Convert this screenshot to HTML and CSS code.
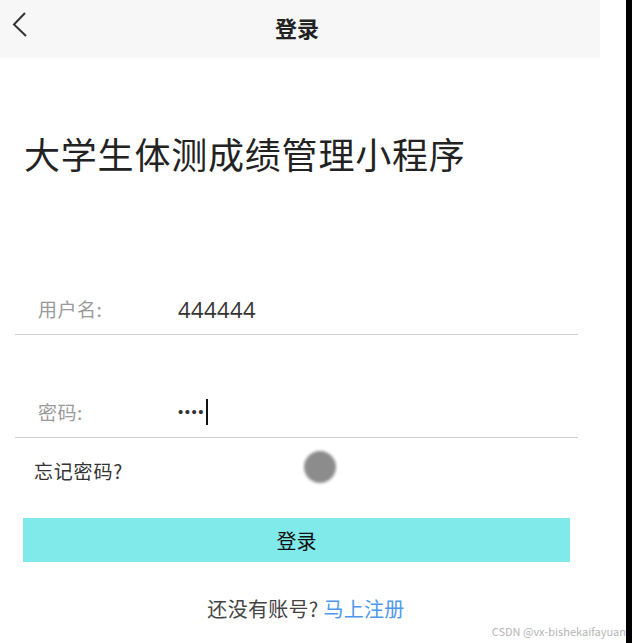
FILE: index.html
```html
<!DOCTYPE html>
<html>
<head>
    <title>登录</title>
    <link rel="stylesheet" href="styles.css">
</head>
<body>
    <div class="screen">
        <div class="page">
            <div class="nav">
                <svg class="back" width="20" height="28" viewBox="0 0 20 28">
                    <path d="M14 2 L3 13.5 L15 25" fill="none" stroke="#333" stroke-width="2"/>
                </svg>
                <span class="nav-title">登录</span>
            </div>

            <h1 class="app-title">大学生体测成绩管理小程序</h1>

            <div class="field">
                <label class="field-label">用户名:</label>
                <span class="field-value">444444</span>
            </div>
            <div class="field field-pwd">
                <label class="field-label">密码:</label>
                <span class="field-value dots">••••</span><span class="caret"></span>
            </div>

            <div class="forgot">忘记密码?</div>

            <button class="login-btn">登录</button>

            <div class="register">还没有账号? <a class="register-link">马上注册</a></div>

            <div class="touch"></div>
            <div class="watermark">CSDN @vx-bishekaifayuan</div>
        </div>
        <div class="edge"></div>
    </div>
</body>
</html>
```

FILE: styles.css
```css
:root {
    --nav-bg: #F7F7F7;
    --text-color: #222222;
    --label-color: #9A9A9A;
    --line-color: #D0D0D0;
    --button-color: #80EAEA;
    --link-color: #4F98EE;
}

body {
    margin: 0;
    font-family: "Noto Sans CJK SC", "Noto Sans", sans-serif;
    color: var(--text-color);
    background: white;
}

.screen {
    display: flex;
    width: 632px;
    height: 643px;
    overflow: hidden;
}

.page {
    position: relative;
    width: 626px;
    height: 643px;
}

.edge {
    width: 6px;
    background: #000;
}

.nav {
    position: relative;
    width: 600px;
    height: 58px;
    background: var(--nav-bg);
    display: flex;
    align-items: center;
    justify-content: center;
}

.back {
    position: absolute;
    left: 11px;
    top: 11px;
}

.nav-title {
    font-size: 22px;
    font-weight: 700;
    margin-left: -6px;
    margin-top: -4px;
}

.app-title {
    margin: 72px 0 0 24px;
    font-size: 36px;
    font-weight: 400;
    line-height: 46px;
    letter-spacing: 0.8px;
}

.field {
    display: flex;
    align-items: center;
    height: 51px;
    margin: 107px 48px 0 15px;
    border-bottom: 1px solid var(--line-color);
}

.field-pwd {
    margin-top: 51px;
}

.field-label {
    width: 140px;
    padding-left: 23px;
    font-size: 19px;
    letter-spacing: 0.5px;
    color: var(--label-color);
}

.field-value {
    font-family: "Open Sans", "Noto Sans", sans-serif;
    font-size: 22px;
    letter-spacing: 0.4px;
    color: #333;
}

.dots {
    font-family: "Liberation Sans", sans-serif;
    font-size: 15px;
    letter-spacing: 1.5px;
}

.caret {
    width: 2px;
    height: 26px;
    margin-left: 1px;
    background: #111;
}

.forgot {
    margin: 20px 0 0 34px;
    font-size: 19px;
    letter-spacing: 0.8px;
    line-height: 26px;
    color: #333;
}

.login-btn {
    display: block;
    width: 547px;
    height: 44px;
    margin: 34px 0 0 23px;
    border: none;
    background: var(--button-color);
    font-family: inherit;
    font-size: 20px;
    color: #111;
}

.register {
    margin: 34px 0 0 0;
    width: 612px;
    text-align: center;
    font-size: 20px;
    letter-spacing: 0.3px;
    line-height: 26px;
    color: #444;
}

.register-link {
    color: var(--link-color);
}

.touch {
    position: absolute;
    left: 304px;
    top: 451px;
    width: 32px;
    height: 32px;
    border-radius: 50%;
    background: #8C8C8C;
    filter: blur(1.5px);
}

.watermark {
    position: absolute;
    right: 0;
    bottom: 4px;
    font-size: 11px;
    color: #B5B5B5;
    white-space: nowrap;
}
```
